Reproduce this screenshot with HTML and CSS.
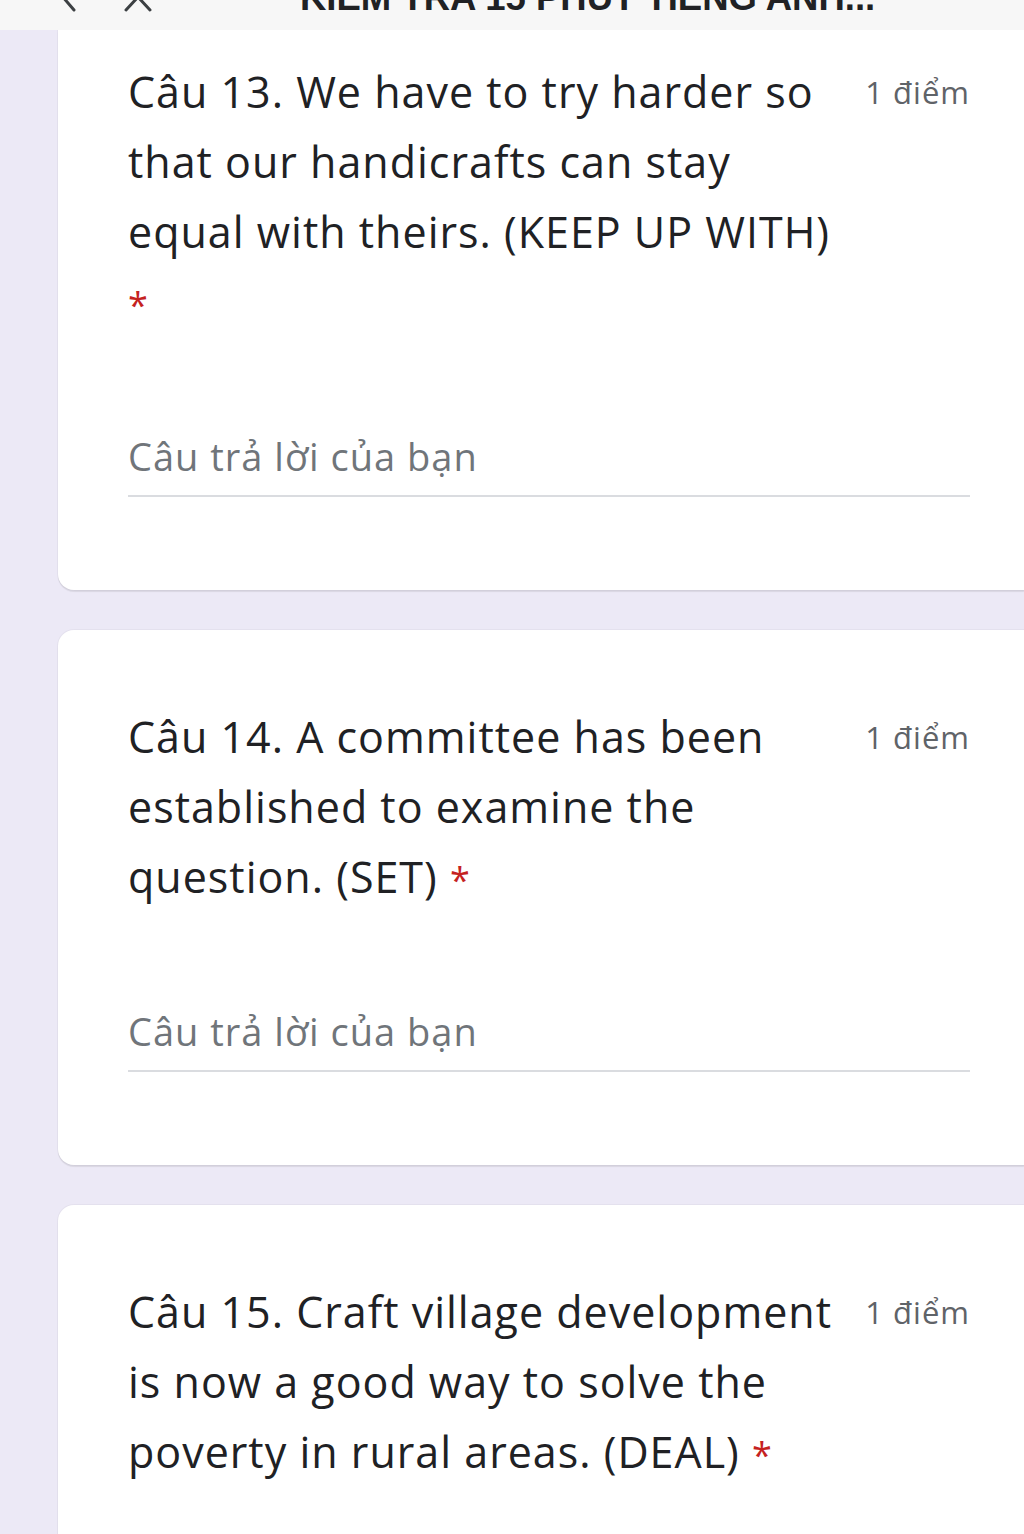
FILE: index.html
```html
<!DOCTYPE html>
<html lang="vi">
<head>
<meta charset="utf-8">
<title>Kiểm tra 15 phút Tiếng Anh</title>
<link rel="stylesheet" href="styles.css">
</head>
<body>
<header class="topbar">
  <span class="topbar-icon topbar-back">
    <svg width="20" height="40" viewBox="0 0 20 40"><path d="M16 6 L4 20 L16 34" fill="none" stroke="#3c4043" stroke-width="3" stroke-linecap="round"/></svg>
  </span>
  <span class="topbar-icon topbar-close">
    <svg width="30" height="40" viewBox="0 0 30 40"><path d="M3 8 L27 34 M27 8 L3 34" fill="none" stroke="#3c4043" stroke-width="3" stroke-linecap="round"/></svg>
  </span>
  <span class="topbar-title">KIỂM TRA 15 PHÚT TIẾNG ANH...</span>
</header>
<main class="list">
  <section class="card card-cut">
    <div class="q-head">
      <div class="q-text">Câu 13. We have to try harder so that our handicrafts can stay equal with theirs. (KEEP UP WITH) <span class="req">*</span></div>
      <div class="q-points">1 điểm</div>
    </div>
    <div class="answer">Câu trả lời của bạn</div>
  </section>
  <section class="card">
    <div class="q-head">
      <div class="q-text">Câu 14. A committee has been established to examine the question. (SET) <span class="req">*</span></div>
      <div class="q-points">1 điểm</div>
    </div>
    <div class="answer">Câu trả lời của bạn</div>
  </section>
  <section class="card">
    <div class="q-head">
      <div class="q-text">Câu 15. Craft village development is now a good way to solve the poverty in rural areas. (DEAL) <span class="req">*</span></div>
      <div class="q-points">1 điểm</div>
    </div>
    <div class="answer">Câu trả lời của bạn</div>
  </section>
</main>
</body>
</html>
```
FILE: styles.css
```css
html, body {
  margin: 0;
  padding: 0;
}
body {
  background: #ece9f6;
  font-family: "Open Sans", "Noto Sans", "Liberation Sans", sans-serif;
  color: #202124;
  overflow: hidden;
  height: 1534px;
}
.topbar {
  height: 30px;
  background: #f7f7f7;
  display: flex;
  align-items: flex-end;
  overflow: hidden;
  position: relative;
}
.topbar-icon {
  display: block;
  height: 40px;
}
.topbar-back {
  margin-left: 58px;
  margin-bottom: 14px;
}
.topbar-close {
  margin-left: 45px;
  margin-bottom: 14px;
}
.topbar-title {
  margin-left: 147px;
  margin-bottom: 12px;
  font-family: "Liberation Sans", Arial, sans-serif;
  font-weight: bold;
  font-size: 36.5px;
  line-height: 40px;
  color: #202124;
  white-space: nowrap;
}
.list {
  display: flex;
  flex-direction: column;
  gap: 40px;
  padding-left: 58px;
}
.card {
  background: #ffffff;
  border-radius: 16px 0 0 16px;
  box-shadow: 0 2px 1px rgba(0, 0, 0, 0.08), 0 0 0 1px rgba(0, 0, 0, 0.03);
  padding: 72px 54px 93px 70px;
}
.card-cut {
  border-top-left-radius: 0;
  padding-top: 27px;
}
.q-head {
  display: flex;
  align-items: flex-start;
  gap: 16px;
}
.q-text {
  flex: 1;
  max-width: 728px;
  font-size: 43px;
  line-height: 70px;
  letter-spacing: 1px;
  color: #202124;
}
.req {
  color: #c5221f;
  font-size: 36px;
  line-height: 1;
}
.q-points {
  margin-left: auto;
  font-size: 31px;
  line-height: 70px;
  letter-spacing: 1px;
  color: #5f6368;
  white-space: nowrap;
}
.answer {
  margin-top: 94px;
  font-size: 38px;
  line-height: 50px;
  letter-spacing: 1px;
  color: #70757a;
  padding-bottom: 14px;
  border-bottom: 2px solid #dadce0;
}
```
